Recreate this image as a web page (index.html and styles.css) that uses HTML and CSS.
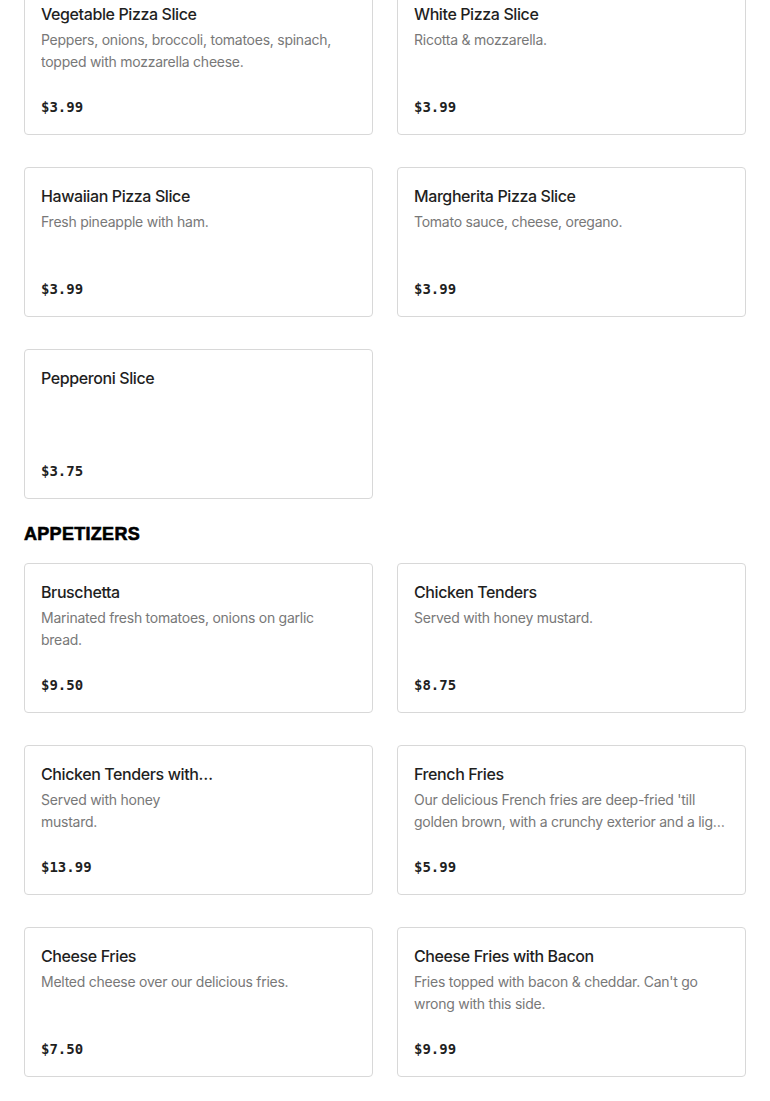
FILE: index.html
```html
<!DOCTYPE html>
<html>
<head>
<meta charset="utf-8">
<link rel="stylesheet" href="styles.css">
</head>
<body>
<main class="menu">
  <section class="section first">
    <div class="grid">
      <div class="card"><div class="info"><h3 class="title">Vegetable Pizza Slice</h3><p class="desc">Peppers, onions, broccoli, tomatoes, spinach, topped with mozzarella cheese.</p></div><div class="price">$3.99</div></div>
      <div class="card"><div class="info"><h3 class="title">White Pizza Slice</h3><p class="desc">Ricotta &amp; mozzarella.</p></div><div class="price">$3.99</div></div>
      <div class="card"><div class="info"><h3 class="title">Hawaiian Pizza Slice</h3><p class="desc">Fresh pineapple with ham.</p></div><div class="price">$3.99</div></div>
      <div class="card"><div class="info"><h3 class="title">Margherita Pizza Slice</h3><p class="desc">Tomato sauce, cheese, oregano.</p></div><div class="price">$3.99</div></div>
      <div class="card"><div class="info"><h3 class="title">Pepperoni Slice</h3><p class="desc"></p></div><div class="price">$3.75</div></div>
    </div>
  </section>
  <section class="section">
    <h2 class="heading">APPETIZERS</h2>
    <div class="grid">
      <div class="card"><div class="info"><h3 class="title">Bruschetta</h3><p class="desc">Marinated fresh tomatoes, onions on garlic bread.</p></div><div class="price">$9.50</div></div>
      <div class="card"><div class="info"><h3 class="title">Chicken Tenders</h3><p class="desc">Served with honey mustard.</p></div><div class="price">$8.75</div></div>
      <div class="card"><div class="info narrow"><h3 class="title">Chicken Tenders with French Fries</h3><p class="desc">Served with honey mustard.</p></div><div class="price">$13.99</div></div>
      <div class="card"><div class="info"><h3 class="title">French Fries</h3><p class="desc">Our delicious French fries are deep-fried 'till golden brown, with a crunchy exterior and a light fluffy interior.</p></div><div class="price">$5.99</div></div>
      <div class="card"><div class="info"><h3 class="title">Cheese Fries</h3><p class="desc">Melted cheese over our delicious fries.</p></div><div class="price">$7.50</div></div>
      <div class="card"><div class="info"><h3 class="title">Cheese Fries with Bacon</h3><p class="desc">Fries topped with bacon &amp; cheddar. Can't go wrong with this side.</p></div><div class="price">$9.99</div></div>
    </div>
  </section>
</main>
</body>
</html>
```

FILE: styles.css
```css
* { box-sizing: border-box; }
html, body { margin: 0; padding: 0; background: #fff; }
body { font-family: "Inter", "Liberation Sans", sans-serif; color: #191919; }
.menu { padding: 0 24px 40px; margin-top: -15px; }
.section { margin-top: 23px; }
.section.first { margin-top: 0; }
.heading {
  margin: 0 0 17px;
  font-family: "Liberation Sans", Arial, sans-serif;
  font-weight: 900;
  font-size: 18px;
  line-height: 24px;
  color: #000;
  letter-spacing: 0.3px;
  -webkit-text-stroke: 0.6px #000;
}
.grid {
  display: grid;
  grid-template-columns: 1fr 1fr;
  gap: 32px 24px;
}
.card {
  height: 150px;
  border: 1px solid #d8d8d8;
  border-radius: 4px;
  padding: 16px 16px 15px;
  display: flex;
  flex-direction: column;
}
.info { min-width: 0; }
.info.narrow { width: 175px; }
.info.narrow .desc { max-width: 170px; }
.title {
  margin: 0;
  font-size: 16px;
  font-weight: 500;
  line-height: 24px;
  letter-spacing: -0.4px;
  color: #1f1f1f;
  white-space: nowrap;
  overflow: hidden;
  text-overflow: ellipsis;
}
.desc {
  margin: 3px 0 0;
  font-size: 14px;
  line-height: 22px;
  letter-spacing: -0.25px;
  color: #787878;
  display: -webkit-box;
  -webkit-line-clamp: 2;
  -webkit-box-orient: vertical;
  overflow: hidden;
}
.price {
  margin-top: auto;
  font-family: "DejaVu Sans Mono", "Liberation Mono", monospace;
  font-weight: 700;
  font-size: 14px;
  line-height: 24px;
  color: #1f1f1f;
}
```
